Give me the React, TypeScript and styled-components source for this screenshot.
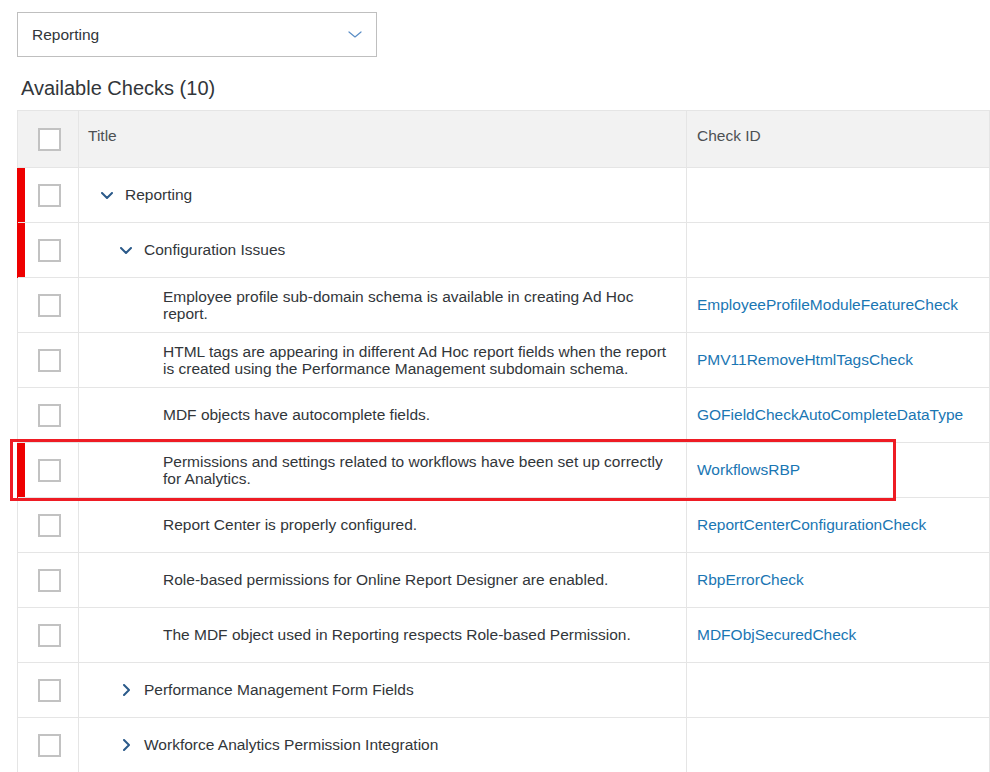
import React from 'react';
import styled, { createGlobalStyle } from 'styled-components';

const GlobalStyle = createGlobalStyle`
  html, body {
    margin: 0;
    padding: 0;
    background: #ffffff;
    overflow: hidden;
  }
  body {
    font-family: "Liberation Sans", Arial, sans-serif;
    color: #32363a;
  }
`;

const Page = styled.div`
  box-sizing: border-box;
  width: 990px;
  padding: 12px 0 0 17px;
`;

const Select = styled.div`
  box-sizing: border-box;
  width: 360px;
  height: 45px;
  border: 1px solid #bfbfbf;
  display: flex;
  align-items: center;
  justify-content: space-between;
  padding: 0 14px 0 14px;
  font-size: 15.5px;
  color: #32363a;
  background: #fff;
`;

const Heading = styled.h2`
  margin: 19px 0 10px 4px;
  font-size: 20px;
  line-height: 24px;
  font-weight: normal;
  color: #32363a;
`;

const Table = styled.div`
  border-top: 1px solid #e5e5e5;
`;

const Row = styled.div<{ $flagged?: boolean; $header?: boolean }>`
  position: relative;
  display: grid;
  grid-template-columns: 61px 608px 1fr;
  height: ${(p) => (p.$header ? '57px' : '55px')};
  border-left: 1px solid ${(p) => (p.$flagged ? '#ee0000' : '#e5e5e5')};
  background: ${(p) => (p.$header ? '#f2f2f2' : '#ffffff')};
  font-size: 15.5px;
`;

const Cell = styled.div<{ $padLeft?: number; $marker?: boolean; $raise?: number }>`
  box-sizing: border-box;
  display: flex;
  align-items: center;
  border-right: 1px solid #e5e5e5;
  border-bottom: 1px solid #e5e5e5;
  padding-left: ${(p) => p.$padLeft ?? 0}px;
  padding-bottom: ${(p) => p.$raise ?? 0}px;
  box-shadow: ${(p) => (p.$marker ? 'inset 7px 0 0 #ee0000' : 'none')};
  min-width: 0;
`;

const HeaderText = styled.span`
  color: #4d5154;
`;

const Checkbox = styled.span`
  box-sizing: border-box;
  display: block;
  width: 23px;
  height: 23px;
  border: 2px solid #c2c2c2;
  background: #fff;
`;

const TreeLabel = styled.div<{ $level: number }>`
  display: flex;
  align-items: center;
  padding-left: ${(p) => 21 + p.$level * 19}px;
  padding-right: 12px;
  line-height: 17.5px;
`;

const Toggle = styled.span`
  flex: none;
  width: 14px;
  height: 14px;
  margin-right: 11px;
  display: flex;
  align-items: center;
  justify-content: center;
  color: #2b5a8a;
`;

const Link = styled.a`
  color: #1a76b3;
  text-decoration: none;
  white-space: nowrap;
`;

const Highlight = styled.div`
  position: absolute;
  z-index: 2;
  left: -8px;
  top: -4px;
  width: 886px;
  height: 62px;
  box-sizing: border-box;
  border: 3px solid #ee1c24;
  pointer-events: none;
`;

const ChevronDown = ({ color = 'currentColor', w = 12, h = 7, sw = 2 }) => (
  <svg width={w} height={h} viewBox={`0 0 ${w} ${h}`} fill="none">
    <path
      d={`M1 1 L${w / 2} ${h - 1} L${w - 1} 1`}
      stroke={color}
      strokeWidth={sw}
      strokeLinecap="round"
      strokeLinejoin="round"
    />
  </svg>
);

const ChevronRight = () => (
  <svg width="7" height="12" viewBox="0 0 7 12" fill="none">
    <path
      d="M1 1 L6 6 L1 11"
      stroke="currentColor"
      strokeWidth="2"
      strokeLinecap="round"
      strokeLinejoin="round"
    />
  </svg>
);

type Item = {
  title: string;
  level: number;
  kind: 'open' | 'closed' | 'leaf';
  checkId?: string;
  flagged?: boolean;
  highlighted?: boolean;
};

const items: Item[] = [
  { title: 'Reporting', level: 0, kind: 'open', flagged: true },
  { title: 'Configuration Issues', level: 1, kind: 'open', flagged: true },
  {
    title:
      'Employee profile sub-domain schema is available in creating Ad Hoc report.',
    level: 2,
    kind: 'leaf',
    checkId: 'EmployeeProfileModuleFeatureCheck',
  },
  {
    title:
      'HTML tags are appearing in different Ad Hoc report fields when the report is created using the Performance Management subdomain schema.',
    level: 2,
    kind: 'leaf',
    checkId: 'PMV11RemoveHtmlTagsCheck',
  },
  {
    title: 'MDF objects have autocomplete fields.',
    level: 2,
    kind: 'leaf',
    checkId: 'GOFieldCheckAutoCompleteDataType',
  },
  {
    title:
      'Permissions and settings related to workflows have been set up correctly for Analytics.',
    level: 2,
    kind: 'leaf',
    checkId: 'WorkflowsRBP',
    flagged: true,
    highlighted: true,
  },
  {
    title: 'Report Center is properly configured.',
    level: 2,
    kind: 'leaf',
    checkId: 'ReportCenterConfigurationCheck',
  },
  {
    title: 'Role-based permissions for Online Report Designer are enabled.',
    level: 2,
    kind: 'leaf',
    checkId: 'RbpErrorCheck',
  },
  {
    title: 'The MDF object used in Reporting respects Role-based Permission.',
    level: 2,
    kind: 'leaf',
    checkId: 'MDFObjSecuredCheck',
  },
  { title: 'Performance Management Form Fields', level: 1, kind: 'closed' },
  { title: 'Workforce Analytics Permission Integration', level: 1, kind: 'closed' },
];

function CheckRow({ item }: { item: Item }) {
  return (
    <Row $flagged={item.flagged}>
      <Cell $padLeft={20} $marker={item.flagged}>
        <Checkbox />
      </Cell>
      <Cell>
        <TreeLabel $level={item.level}>
          <Toggle>
            {item.kind === 'open' && <ChevronDown />}
            {item.kind === 'closed' && <ChevronRight />}
          </Toggle>
          <span>{item.title}</span>
        </TreeLabel>
      </Cell>
      <Cell $padLeft={10}>
        {item.checkId && <Link href="#">{item.checkId}</Link>}
      </Cell>
      {item.highlighted && <Highlight />}
    </Row>
  );
}

export default function App() {
  return (
    <Page>
      <GlobalStyle />
      <Select>
        <span>Reporting</span>
        <ChevronDown color="#5b8ec6" w={14} h={7} sw={1.2} />
      </Select>
      <Heading>Available Checks (10)</Heading>
      <Table>
        <Row $header>
          <Cell $padLeft={20}>
            <Checkbox />
          </Cell>
          <Cell $padLeft={9} $raise={6}>
            <HeaderText>Title</HeaderText>
          </Cell>
          <Cell $padLeft={10} $raise={6}>
            <HeaderText>Check ID</HeaderText>
          </Cell>
        </Row>
        {items.map((item) => (
          <CheckRow key={item.title} item={item} />
        ))}
      </Table>
    </Page>
  );
}
